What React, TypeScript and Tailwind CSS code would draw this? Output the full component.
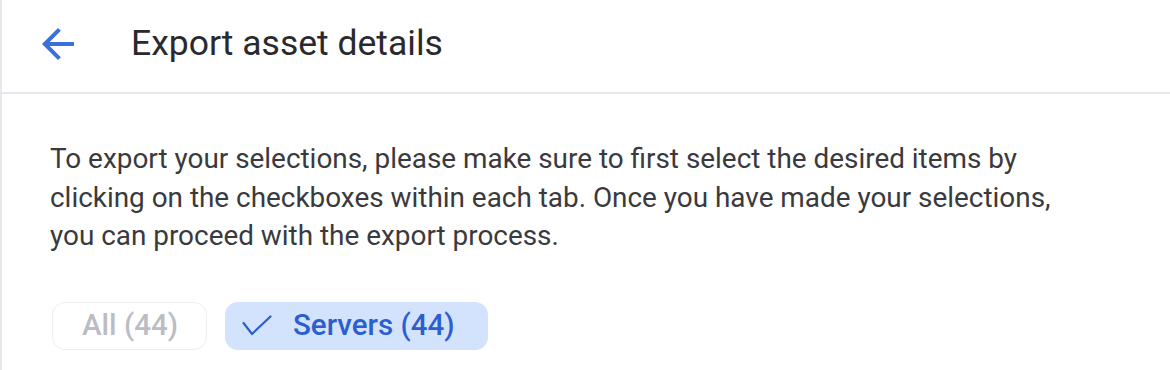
export default function App() {
  return (
    <div className="h-[370px] w-[1170px] overflow-hidden bg-white border-l-2 border-[#e6e6ec] font-['Roboto',sans-serif]">
      {/* Header */}
      <div className="flex h-[94px] items-center border-b-2 border-[#e6e6ec] pb-[4px]">
        <button className="ml-[32px] flex h-[48px] w-[48px] items-center justify-center text-[#3b6fdc]">
          <svg viewBox="0 0 24 24" className="h-[48px] w-[48px]" fill="currentColor">
            <path d="M20 11H7.83l5.59-5.59L12 4l-8 8 8 8 1.41-1.41L7.83 13H20v-2z" />
          </svg>
        </button>
        <h1 className="ml-[49px] text-[35.5px] font-normal text-[#2a2a2e]">Export asset details</h1>
      </div>

      {/* Body */}
      <div className="pl-[48px] pt-[46px]">
        <p className="w-[1040px] text-[27.9px] leading-[38.5px] text-[#3a3a3e]">
          To export your selections, please make sure to first select the desired items by clicking on the checkboxes within each tab. Once you have made your selections, you can proceed with the export process.
        </p>

        <div className="mt-[46px] flex gap-[18px] pl-[2px]">
          <div className="flex h-[48px] items-center rounded-[13px] border border-[#eeeef2] pl-[29px] pr-[28px] text-[29.5px] font-medium text-[#bcbcc4]">
            All (44)
          </div>
          <div className="flex h-[48px] items-center rounded-[13px] bg-[#d3e3fd] pl-[17px] pr-[33px] text-[29.5px] font-medium text-[#2c5fcd]">
            <svg viewBox="0 0 30 21" className="mr-[21px] h-[21px] w-[30px]" fill="none" stroke="#2c5fcd" strokeWidth={2.2} strokeLinecap="round" strokeLinejoin="round">
              <polyline points="1.5,8 10,19 28.5,1.5" />
            </svg>
            Servers (44)
          </div>
        </div>
      </div>
    </div>
  )
}
